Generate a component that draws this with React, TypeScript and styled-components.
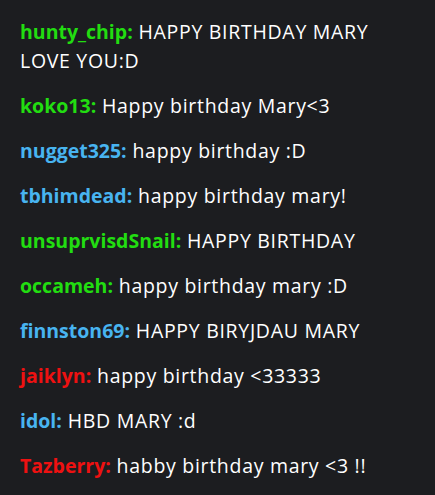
import React from "react";
import styled, { createGlobalStyle } from "styled-components";

const Global = createGlobalStyle`
  html, body { margin: 0; padding: 0; background: #1c1d20; }
  body { font-family: "Open Sans", "Lato", sans-serif; }
`;

const Chat = styled.div`
  width: 435px;
  height: 495px;
  box-sizing: border-box;
  padding: 9px 0 0;
  background: #1c1d20;
  display: flex;
  flex-direction: column;
  overflow: hidden;
`;

const Message = styled.div`
  padding: 8px 20px;
  font-size: 19.5px;
  line-height: 29px;
  letter-spacing: 0.7px;
  color: #ffffff;
`;

const Name = styled.span<{ $color: string }>`
  font-weight: 700;
  letter-spacing: 0;
  color: ${(p) => p.$color};
`;

const GREEN = "#22dd11";
const BLUE = "#48b4f0";
const RED = "#ee1111";

const messages = [
  { name: "hunty_chip", color: GREEN, text: "HAPPY BIRTHDAY MARY LOVE YOU:D" },
  { name: "koko13", color: GREEN, text: "Happy birthday Mary<3" },
  { name: "nugget325", color: BLUE, text: "happy birthday :D" },
  { name: "tbhimdead", color: BLUE, text: "happy birthday mary!" },
  { name: "unsuprvisdSnail", color: GREEN, text: "HAPPY BIRTHDAY" },
  { name: "occameh", color: GREEN, text: "happy birthday mary :D" },
  { name: "finnston69", color: BLUE, text: "HAPPY BIRYJDAU MARY" },
  { name: "jaiklyn", color: RED, text: "happy birthday <33333" },
  { name: "idol", color: BLUE, text: "HBD MARY :d" },
  { name: "Tazberry", color: RED, text: "habby birthday mary <3 !!" },
];

export default function App() {
  return (
    <>
      <Global />
      <Chat>
        {messages.map((m, i) => (
          <Message key={i}>
            <Name $color={m.color}>{m.name}:</Name> {m.text}
          </Message>
        ))}
      </Chat>
    </>
  );
}
